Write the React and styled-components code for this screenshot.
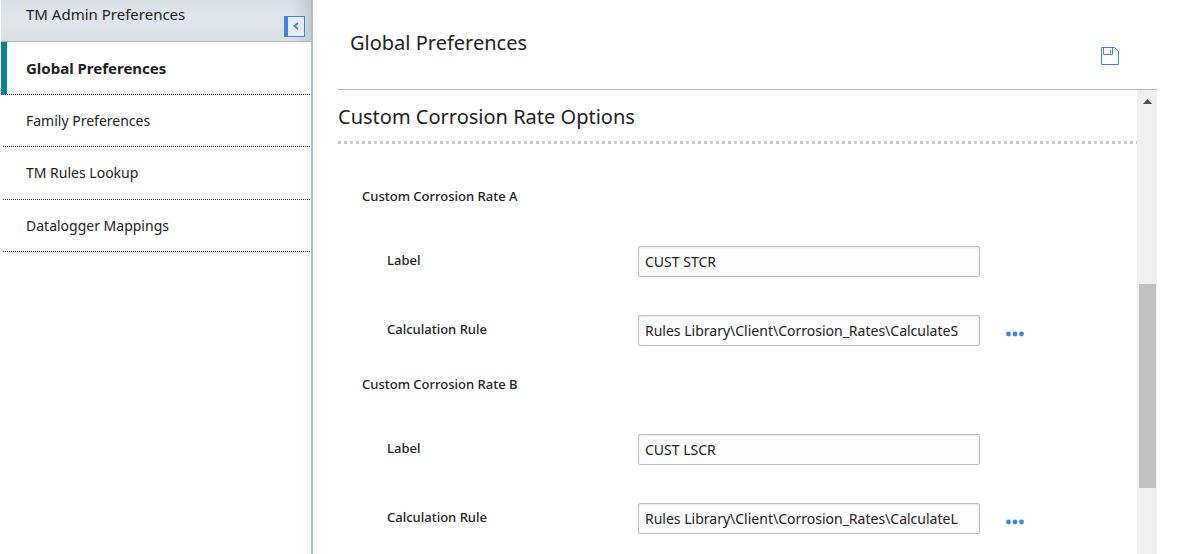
import React from 'react'
import styled, { createGlobalStyle } from 'styled-components'

const NAV_ITEMS = ['Global Preferences', 'Family Preferences', 'TM Rules Lookup', 'Datalogger Mappings']

const RATES = [
	{
		id: 'a',
		title: 'Custom Corrosion Rate A',
		label: 'CUST STCR',
		rule: 'Rules Library\\Client\\Corrosion_Rates\\CalculateS',
	},
	{
		id: 'b',
		title: 'Custom Corrosion Rate B',
		label: 'CUST LSCR',
		rule: 'Rules Library\\Client\\Corrosion_Rates\\CalculateL',
	},
]

function RateGroup({ rate }) {
	return (
		<Group>
			<GroupTitle>{rate.title}</GroupTitle>
			<Fields>
				<FieldRow>
					<FieldLabel htmlFor={`label-${rate.id}`}>Label</FieldLabel>
					<TextInput id={`label-${rate.id}`} type='text' defaultValue={rate.label} />
				</FieldRow>
				<FieldRow>
					<FieldLabel htmlFor={`rule-${rate.id}`}>Calculation Rule</FieldLabel>
					<TextInput id={`rule-${rate.id}`} type='text' defaultValue={rate.rule} />
					<BrowseButton type='button' aria-label='Browse rules'>
						<svg width='18' height='6' viewBox='0 0 18 6' fill='#3f83ea'>
							<circle cx='2.5' cy='3' r='2.4' />
							<circle cx='9' cy='3' r='2.4' />
							<circle cx='15.5' cy='3' r='2.4' />
						</svg>
					</BrowseButton>
				</FieldRow>
			</Fields>
		</Group>
	)
}

function App() {
	const [active, setActive] = React.useState(NAV_ITEMS[0])

	return (
		<>
			<GlobalStyle />
			<Page>
				<Sidebar>
					<SidebarHeader>
						<SidebarTitle>TM Admin Preferences</SidebarTitle>
						<CollapseButton type='button' aria-label='Collapse panel'>
							<svg width='6' height='8' viewBox='0 0 6 8' fill='none' stroke='#3f83ea' strokeWidth='1.8'>
								<path d='M5 1L1.5 4L5 7' />
							</svg>
						</CollapseButton>
					</SidebarHeader>
					<Nav>
						{NAV_ITEMS.map((item) => (
							<NavLink key={item} href='#' $active={item === active} onClick={() => setActive(item)}>
								{item}
							</NavLink>
						))}
					</Nav>
				</Sidebar>
				<Main>
					<MainHeader>
						<PageTitle>Global Preferences</PageTitle>
						<SaveButton type='button' aria-label='Save'>
							<svg width='18' height='18' viewBox='0 0 18 18' fill='none' stroke='#3f83ea'>
								<path d='M0.5 0.5H13.5L17.5 4.5V17.5H0.5Z' />
								<path d='M2.5 0.5V7.5H11.5V0.5' />
								<path d='M9.5 3V6' />
							</svg>
						</SaveButton>
					</MainHeader>
					<Body>
						<Content>
							<SectionTitle>Custom Corrosion Rate Options</SectionTitle>
							<Groups>
								{RATES.map((rate) => (
									<RateGroup key={rate.id} rate={rate} />
								))}
							</Groups>
						</Content>
						<ScrollTrack>
							<svg width='9' height='5' viewBox='0 0 9 5' fill='#505050'>
								<path d='M4.5 0L9 5H0Z' />
							</svg>
							<ScrollThumb />
						</ScrollTrack>
					</Body>
				</Main>
			</Page>
		</>
	)
}

export default App

const GlobalStyle = createGlobalStyle`
	* {
		box-sizing: border-box;
	}
	body {
		margin: 0;
		background: #fff;
		color: #222;
		font-family: 'Noto Sans', 'Open Sans', sans-serif;
		font-size: 14px;
	}
`
const Page = styled.div`
	display: flex;
	min-height: 100vh;
`
const Sidebar = styled.aside`
	flex: 0 0 313px;
	padding-left: 1px;
	border-right: 2px solid #b4bcc8;
`
const SidebarHeader = styled.header`
	display: flex;
	justify-content: space-between;
	height: 42px;
	padding: 4px 6px 4px 25px;
	border-bottom: 1px solid #b0b4bc;
	background: linear-gradient(90deg, rgba(200, 204, 208, 0) 94%, #c6cbce), linear-gradient(#d9dee2, #e0e5ec 30%, #e0e5ec 60%, #d9dee2);
`
const SidebarTitle = styled.div`
	font-size: 15px;
	line-height: 20px;
`
const CollapseButton = styled.button`
	display: flex;
	align-items: center;
	justify-content: center;
	align-self: flex-end;
	width: 21px;
	height: 21px;
	padding: 0 0 2px;
	border: 1px solid #3f83ea;
	border-left-width: 4px;
	background: #e8edf5;
	cursor: pointer;
`
const Nav = styled.nav`
	display: grid;
	grid-template-rows: repeat(4, 1fr);
	height: 210px;
	padding-right: 1px;
`
const NavLink = styled.a`
	display: flex;
	align-items: center;
	margin-left: ${(props) => (props.$active ? '0' : '2px')};
	padding-left: ${(props) => (props.$active ? '19px' : '23px')};
	border-left: ${(props) => (props.$active ? '6px solid #08819b' : 'none')};
	border-bottom: 1px dotted #333;
	color: #222;
	font-size: ${(props) => (props.$active ? '15px' : '14px')};
	font-weight: ${(props) => (props.$active ? 700 : 400)};
	text-decoration: none;
`
const Main = styled.main`
	display: flex;
	flex: 1;
	flex-direction: column;
	min-width: 0;
	margin: 0 24px 0 25px;
`
const MainHeader = styled.header`
	display: flex;
	justify-content: space-between;
	height: 90px;
	padding: 29px 38px 0 12px;
	border-bottom: 1px solid #b8b8b8;
`
const PageTitle = styled.h1`
	margin: 0;
	font-size: 20px;
	font-weight: 400;
	line-height: 28px;
`
const SaveButton = styled.button`
	display: flex;
	align-self: flex-start;
	margin-top: 18px;
	padding: 0;
	border: none;
	background: none;
	cursor: pointer;
`
const Body = styled.div`
	display: flex;
	flex: 1;
`
const Content = styled.div`
	flex: 1;
	min-width: 0;
`
const SectionTitle = styled.h2`
	margin: 0;
	padding-top: 13px;
	font-size: 20px;
	font-weight: 400;
	line-height: 28px;

	&::after {
		content: '';
		display: block;
		height: 3px;
		margin-top: 10px;
		background: repeating-linear-gradient(90deg, #ccc 0 3px, transparent 3px 6px);
	}
`
const Groups = styled.div`
	display: flex;
	flex-direction: column;
	gap: 28px;
	padding: 42px 0 20px 24px;
`
const Group = styled.section`
	display: flex;
	flex-direction: column;
	gap: 40px;
`
const GroupTitle = styled.h3`
	margin: 0;
	font-size: 13px;
	font-weight: 500;
	line-height: 20px;
`
const Fields = styled.div`
	display: flex;
	flex-direction: column;
	gap: 38px;
	padding-left: 25px;
`
const FieldRow = styled.div`
	display: grid;
	grid-template-columns: 251fr 342fr 157fr;
`
const FieldLabel = styled.label`
	font-size: 13px;
	font-weight: 500;
	line-height: 28px;
`
const TextInput = styled.input`
	width: 100%;
	min-width: 0;
	height: 31px;
	padding: 0 6px;
	border: 1px solid #bcc0c2;
	border-radius: 2px;
	background: #fcfcfc;
	box-shadow: inset 0 1px 2px rgba(0, 0, 0, 0.08);
	color: #222;
	font-family: inherit;
	font-size: 14px;
`
const BrowseButton = styled.button`
	display: flex;
	align-self: end;
	justify-self: start;
	margin-left: 26px;
	padding: 9px 0;
	border: none;
	background: none;
	cursor: pointer;
`
const ScrollTrack = styled.div`
	display: flex;
	flex: 0 0 20px;
	flex-direction: column;
	align-items: center;
	padding-top: 9px;
	background: #f0f0f0;
`
const ScrollThumb = styled.div`
	width: 17px;
	height: 204px;
	margin-top: 180px;
	background: #c1c1c1;
`
